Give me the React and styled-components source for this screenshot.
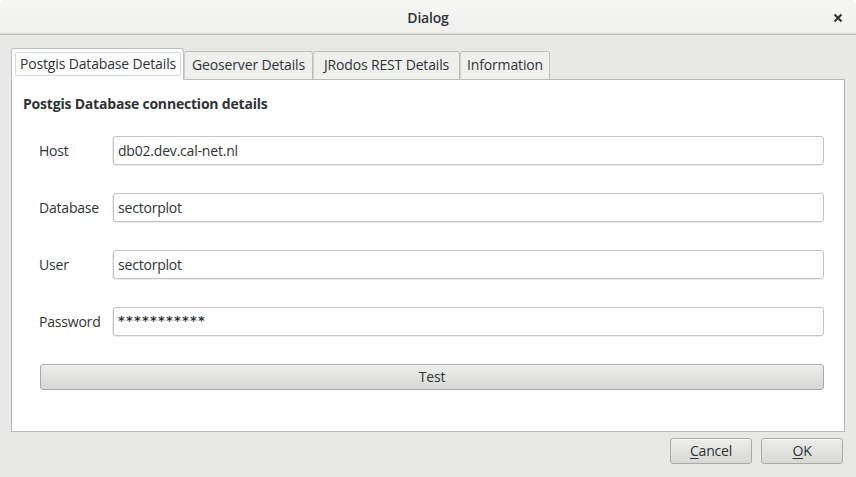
import React from "react";
import styled, { createGlobalStyle } from "styled-components";

const Global = createGlobalStyle`
  html, body { margin: 0; padding: 0; background: #ffffff; }
  body { font-family: "Open Sans", "DejaVu Sans", sans-serif; font-size: 14px; color: #2e3436; }
  * { box-sizing: border-box; }
`;

const Window = styled.div`
  width: 856px;
  height: 477px;
  background: #e8e8e7;
  border-radius: 6px 6px 0 0;
  overflow: hidden;
  display: flex;
  flex-direction: column;
`;

const TitleBar = styled.div`
  height: 35px;
  flex: none;
  background: linear-gradient(#f6f6f5, #efefee);
  border-bottom: 1px solid #bfbfbd;
  box-shadow: inset 0 -1px 0 #dcdcda;
  display: flex;
  align-items: center;
  justify-content: center;
  position: relative;
`;

const Title = styled.div`
  font-size: 14px;
  font-weight: 600;
  color: #2e3436;
  letter-spacing: -0.2px;
`;

const CloseButton = styled.button`
  position: absolute;
  right: 13px;
  top: 13px;
  width: 10px;
  height: 10px;
  padding: 0;
  border: 0;
  background: transparent;
  display: flex;
`;

const Body = styled.div`
  flex: 1;
  display: flex;
  flex-direction: column;
  padding: 13px 11px 0 11px;
`;

const TabBar = styled.div`
  display: flex;
  align-items: flex-end;
  height: 32px;
  position: relative;
  z-index: 1;
`;

const Tab = styled.div`
  width: ${(p) => p.$w}px;
  height: ${(p) => (p.$active ? 32 : 29)}px;
  padding: ${(p) => (p.$active ? "3px 2px 4px 3px" : "0 0 3px 0")};
  border: 1px solid #bdbdbb;
  border-left-color: ${(p) => (p.$first ? "#bdbdbb" : "#cfcfcd")};
  border-bottom: ${(p) => (p.$active ? "none" : "1px solid #bdbdbb")};
  border-radius: 3px 3px 0 0;
  background: ${(p) => (p.$active ? "#ffffff" : "#efefee")};
  display: flex;
  align-items: center;
  justify-content: center;
  font-size: 14px;
  color: #2e3436;
  white-space: nowrap;
  letter-spacing: -0.15px;
`;

const FocusRing = styled.div`
  height: 100%;
  width: 100%;
  padding-bottom: 1px;
  border: 1px solid #d9d9d7;
  border-radius: 2px;
  display: flex;
  align-items: center;
  justify-content: center;
`;

const Pane = styled.div`
  height: 353px;
  margin-top: -1px;
  background: #ffffff;
  border: 1px solid #b6b6b4;
  padding: 15px 20px 0 11px;
  display: flex;
  flex-direction: column;
`;

const Heading = styled.div`
  font-weight: 700;
  font-size: 14px;
  line-height: 18px;
  letter-spacing: -0.2px;
  color: #2e3436;
`;

const Form = styled.div`
  display: grid;
  grid-template-columns: 74px 1fr;
  row-gap: 28px;
  margin-top: 23px;
  padding-left: 16px;
  align-items: center;
`;

const Label = styled.label`
  font-size: 14px;
  letter-spacing: -0.2px;
  color: #2e3436;
`;

const Field = styled.div`
  height: 29px;
  border: 1px solid #c4c4c2;
  border-radius: 3px;
  background: #ffffff;
  box-shadow: -1px 1px 0 #ececeb;
  display: flex;
  align-items: center;
  padding: 0 4px;
  font-size: 14px;
  letter-spacing: -0.2px;
  color: #2e3436;
`;

const Dots = styled.span`
  font-family: "DejaVu Sans", sans-serif;
  font-size: 13px;
  font-weight: 700;
  letter-spacing: 1.2px;
  color: #2e3436;
  position: relative;
  top: -1px;
`;

const PushButton = styled.button`
  font-family: inherit;
  font-size: 14px;
  letter-spacing: -0.2px;
  color: #2e3436;
  height: ${(p) => p.$h || 26}px;
  width: ${(p) => (p.$w ? p.$w + "px" : "auto")};
  border: 1px solid #a9a9a7;
  border-radius: 3px;
  background: linear-gradient(#ededec, #d8d8d6);
  box-shadow: inset 0 1px 0 #f7f7f6;
  padding: 0 0 1px 0;
  display: flex;
  align-items: center;
  justify-content: center;
`;

const TestButton = styled(PushButton)`
  margin: 28px 0 0 17px;
`;

const Footer = styled.div`
  display: flex;
  justify-content: flex-end;
  gap: 9px;
  padding: 6px 2px 0 0;
`;

const Mnemonic = styled.span`
  text-decoration: underline;
  text-underline-offset: 2px;
`;

export default function App() {
  const rows = [
    ["Host", "db02.dev.cal-net.nl"],
    ["Database", "sectorplot"],
    ["User", "sectorplot"],
  ];
  return (
    <>
      <Global />
      <Window>
        <TitleBar>
          <Title>Dialog</Title>
          <CloseButton aria-label="Close">
            <svg width="10" height="10" viewBox="0 0 10 10">
              <path d="M1.5 1.5 L8.5 8.5 M8.5 1.5 L1.5 8.5" stroke="#2e3436" strokeWidth="2" />
            </svg>
          </CloseButton>
        </TitleBar>
        <Body>
          <TabBar>
            <Tab $active $first $w={173}>
              <FocusRing>Postgis Database Details</FocusRing>
            </Tab>
            <Tab $w={129}>Geoserver Details</Tab>
            <Tab $w={147}>JRodos REST Details</Tab>
            <Tab $w={90}>Information</Tab>
          </TabBar>
          <Pane>
            <Heading>Postgis Database connection details</Heading>
            <Form>
              {rows.map(([l, v]) => (
                <React.Fragment key={l}>
                  <Label>{l}</Label>
                  <Field>{v}</Field>
                </React.Fragment>
              ))}
              <Label>Password</Label>
              <Field>
                <Dots>***********</Dots>
              </Field>
            </Form>
            <TestButton>Test</TestButton>
          </Pane>
          <Footer>
            <PushButton $w={82}>
              <Mnemonic>C</Mnemonic>ancel
            </PushButton>
            <PushButton $w={82}>
              <Mnemonic>O</Mnemonic>K
            </PushButton>
          </Footer>
        </Body>
      </Window>
    </>
  );
}
